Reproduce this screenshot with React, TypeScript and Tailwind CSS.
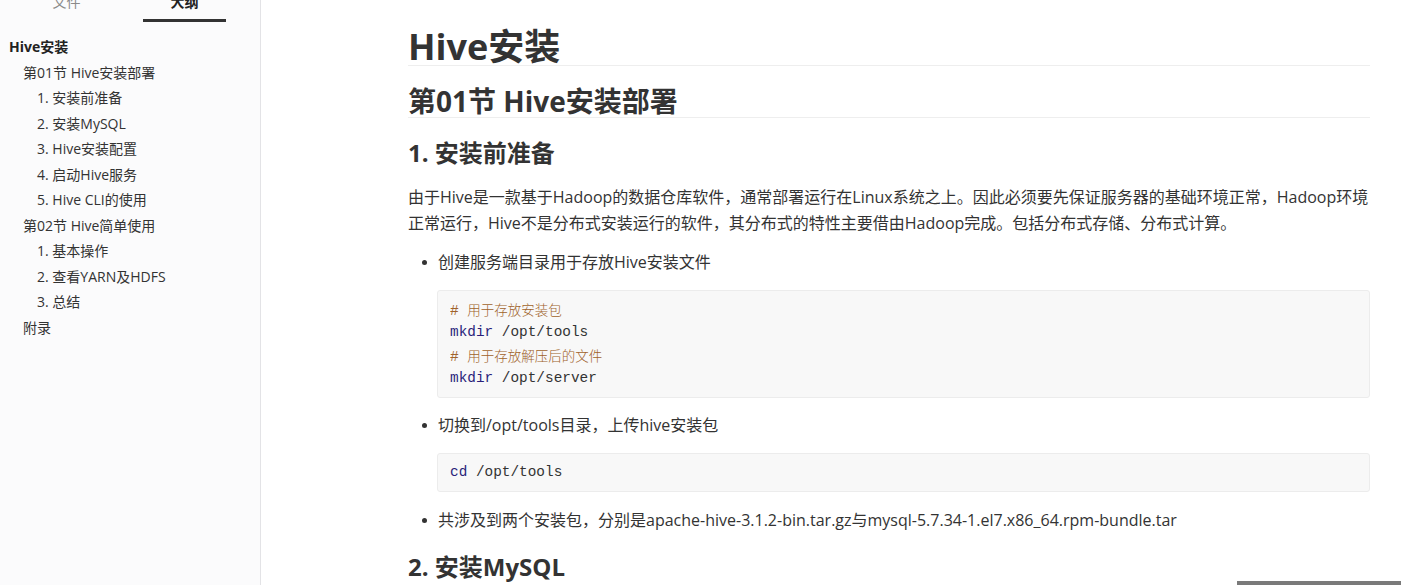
const outline = [
  { level: 1, text: "Hive安装" },
  { level: 2, text: "第01节 Hive安装部署" },
  { level: 3, text: "1. 安装前准备" },
  { level: 3, text: "2. 安装MySQL" },
  { level: 3, text: "3. Hive安装配置" },
  { level: 3, text: "4. 启动Hive服务" },
  { level: 3, text: "5. Hive CLI的使用" },
  { level: 2, text: "第02节 Hive简单使用" },
  { level: 3, text: "1. 基本操作" },
  { level: 3, text: "2. 查看YARN及HDFS" },
  { level: 3, text: "3. 总结" },
  { level: 2, text: "附录" },
];

function Sidebar() {
  return (
    <aside className="w-[261px] shrink-0 h-full bg-[#fbfbfc] border-r border-[#e3e3e6] overflow-hidden">
      {/* tabs, top edge cut by the window */}
      <div className="flex pl-[25px] gap-[35px] -mt-[8px] text-[14px] leading-[20px]">
        <div className="w-[83px] text-center pb-[7px] border-b-[3px] border-transparent text-[#8a8a8a]">文件</div>
        <div className="w-[83px] text-center pb-[7px] border-b-[3px] border-[#333] font-bold text-[#222]">大纲</div>
      </div>
      <ul className="mt-[12px] text-[14px] leading-[25.5px] text-[#333]">
        {outline.map((item, i) => (
          <li
            key={i}
            className={
              item.level === 1
                ? "pl-[9px] font-bold text-[#222]"
                : item.level === 2
                ? "pl-[23px]"
                : "pl-[37px]"
            }
          >
            {item.text}
          </li>
        ))}
      </ul>
    </aside>
  );
}

function CodeBlock({ children }: { children: React.ReactNode }) {
  return (
    <div className="ml-[29px] bg-[#f8f8f8] border border-[#ececec] rounded-[3px] px-[12px] py-[7px] font-['Liberation_Mono','DejaVu_Sans_Mono',monospace] text-[14.4px] leading-[23px] text-[#333]">
      {children}
    </div>
  );
}

function Comment({ text }: { text: string }) {
  return (
    <div className="h-[23px] leading-[23px] text-[#a0622a] overflow-hidden">
      # <span className="font-['Noto_Sans_CJK_SC',serif] font-light text-[13.5px] leading-[23px]">{text}</span>
    </div>
  );
}

function Cmd({ name, arg }: { name: string; arg: string }) {
  return (
    <div className="h-[23px] leading-[23px]">
      <span className="text-[#2a1f7a]">{name}</span> {arg}
    </div>
  );
}

function Bullet({ children }: { children: React.ReactNode }) {
  return (
    <div className="flex items-center h-[26px]">
      <span className="w-[5px] h-[5px] rounded-full bg-[#333] ml-[14px] mr-[11px]"></span>
      <span>{children}</span>
    </div>
  );
}

export default function App() {
  return (
    <div className="relative w-[1401px] h-[585px] overflow-hidden bg-white flex font-['Open_Sans','Noto_Sans_CJK_SC',sans-serif]">
      <Sidebar />
      <main className="flex-1 pl-[147px] pr-[31px] text-[#333]">
        <h1 className="mt-[29px] text-[36px] leading-[36px] font-bold pb-0 border-b border-[#eeeeee]">Hive安装</h1>
        <h2 className="mt-[21px] text-[28px] leading-[28px] font-bold pb-[2px] border-b border-[#eeeeee]">第01节 Hive安装部署</h2>
        <h3 className="mt-[23px] text-[24px] leading-[24px] font-bold">1. 安装前准备</h3>
        <p className="mt-[19px] text-[16px] leading-[26px]">
          由于Hive是一款基于Hadoop的数据仓库软件，通常部署运行在Linux系统之上。因此必须要先保证服务器的基础环境正常，Hadoop环境正常运行，Hive不是分布式安装运行的软件，其分布式的特性主要借由Hadoop完成。包括分布式存储、分布式计算。
        </p>
        <div className="mt-[13px] text-[16px] leading-[26px]">
          <Bullet>创建服务端目录用于存放Hive安装文件</Bullet>
          <div className="mt-[15px]">
            <CodeBlock>
              <Comment text="用于存放安装包" />
              <Cmd name="mkdir" arg="/opt/tools" />
              <Comment text="用于存放解压后的文件" />
              <Cmd name="mkdir" arg="/opt/server" />
            </CodeBlock>
          </div>
          <div className="mt-[14px]">
            <Bullet>切换到/opt/tools目录，上传hive安装包</Bullet>
          </div>
          <div className="mt-[15px]">
            <CodeBlock>
              <Cmd name="cd" arg="/opt/tools" />
            </CodeBlock>
          </div>
          <div className="mt-[15px]">
            <Bullet>共涉及到两个安装包，分别是apache-hive-3.1.2-bin.tar.gz与mysql-5.7.34-1.el7.x86_64.rpm-bundle.tar</Bullet>
          </div>
        </div>
        <h3 className="mt-[22px] text-[24px] leading-[24px] font-bold">2. 安装MySQL</h3>
      </main>
      {/* scrollbar sliver at bottom right */}
      <div className="absolute right-0 bottom-0 w-[164px] h-[4px] bg-[#7a7a7a]"></div>
    </div>
  );
}
